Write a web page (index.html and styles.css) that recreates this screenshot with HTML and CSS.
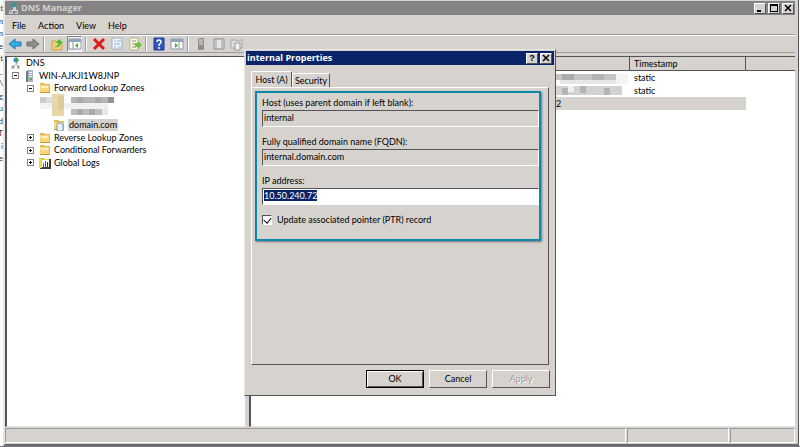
FILE: index.html
```
<!DOCTYPE html>
<html lang="en">
<head>
    <meta charset="UTF-8">
    <meta name="viewport" content="width=device-width, initial-scale=1.0">
    <title>DNS Manager</title>
    <link rel="stylesheet" href="styles.css">
</head>
<body>
    <svg width="0" height="0" class="sprites" aria-hidden="true">
        <symbol id="folder" viewBox="0 0 12 12">
            <path d="M1 1h4l1 1h5v9H1z" fill="#e2b955"/>
            <path d="M1 3h9v7H1z" fill="#f7d67c"/>
            <path d="M2 4h7v2H2z" fill="#fdeebb"/>
            <path d="M1 10h10v1H1z" fill="#c9973a"/>
        </symbol>
        <symbol id="server" viewBox="0 0 12 12">
            <path d="M3 0h6v12H3z" fill="#a9b4bf"/>
            <path d="M2 1h2v11H2z" fill="#6d7b8a"/>
            <path d="M5 2h3v1H5zM5 4h3v1H5zM5 6h3v1H5z" fill="#e8eef4"/>
            <path d="M6 8h2v2H6z" fill="#58b04c"/>
        </symbol>
        <symbol id="dns" viewBox="0 0 12 12">
            <circle cx="5" cy="3" r="2.500" fill="#2f8fc4"/>
            <path d="M4 1h2v2h2l-2 2-2-1z" fill="#3fa54c"/>
            <path d="M4 5h3v4H4z" fill="#d5dbe0"/>
            <path d="M1 8h3v4H0v-2zM6 8h3v4H6z" fill="#c8d0d8"/>
            <path d="M1 10h2M6 10h2M5 6h1" stroke="#65717d"/>
        </symbol>
    </svg>

    <div class="behind" aria-hidden="true">
        <span>t</span><span>m</span><span>m</span><span>e</span><span>t</span><span>_</span><span>\</span><span>g</span><span>u</span><span>d</span><span>T</span><span>i</span><span>e</span>
    </div>

    <div class="window">
        <header class="titlebar">
            <svg class="icon"><use href="#dns"/></svg>
            <h1>DNS Manager</h1>
            <div class="caption-buttons">
                <button aria-label="Minimize"><svg viewBox="0 0 8 8"><path d="M1 6h4v2H1z"/></svg></button>
                <button aria-label="Maximize"><svg viewBox="0 0 8 8"><path d="M0 0h8v8H0zM1 2v5h6V2z" fill-rule="evenodd"/></svg></button>
                <button aria-label="Close"><svg viewBox="0 0 8 8"><path d="M1 1l6 6M7 1L1 7" stroke="#000" stroke-width="1.5"/></svg></button>
            </div>
        </header>

        <nav class="menubar">
            <button>File</button>
            <button>Action</button>
            <button>View</button>
            <button>Help</button>
        </nav>

        <div class="toolbar">
            <button aria-label="Back"><svg viewBox="0 0 14 14"><path d="M1 7l6-5v3h6v4H7v3z" fill="#35aee8" stroke="#1878b8"/></svg></button>
            <button aria-label="Forward"><svg viewBox="0 0 14 14"><path d="M13 7L7 2v3H1v4h6v3z" fill="#8e8e8e" stroke="#6c6c6c"/></svg></button>
            <i class="divider"></i>
            <button aria-label="Up one level"><svg viewBox="0 0 14 14"><path d="M2 4h4l1 1h5v8H2z" fill="#f0ce76" stroke="#c9a04a"/><path d="M4 10c3 0 4-2 4-4H6l3-4 4 4h-2c0 3-3 5-7 4z" fill="#4fbc35"/></svg></button>
            <button class="pressed" aria-label="Show console tree"><svg viewBox="0 0 14 14"><path d="M1 2h12v10H1z" fill="#fff" stroke="#8a98a8"/><path d="M1 2h12v3H1z" fill="#8fa5bd"/><path d="M5 5v7" stroke="#8a98a8"/><path d="M10 6v5L7 8.500z" fill="#3fae3a"/></svg></button>
            <i class="divider"></i>
            <button aria-label="Delete"><svg viewBox="0 0 14 14"><path d="M2 2l10 10M12 2L2 12" stroke="#e01b1b" stroke-width="3"/></svg></button>
            <button aria-label="Properties"><svg viewBox="0 0 14 14"><path d="M2 1h10v11H2z" fill="#eef4fa" stroke="#a3b0bf"/><path d="M4 4h2M7 4h4M4 7h6M4 10h2M8 10h3" stroke="#8db4d8"/></svg></button>
            <button aria-label="Export list"><svg viewBox="0 0 14 14"><path d="M2 1h8v12H2z" fill="#fdf9e2" stroke="#b9ae85"/><path d="M4 4h4M4 7h3M4 10h4" stroke="#8a8a8a"/><path d="M7 6h3V4l4 4-4 4v-2H7z" fill="#6cc43c"/></svg></button>
            <i class="divider"></i>
            <button aria-label="Help"><svg viewBox="0 0 14 14"><path d="M2 1h10v12H2z" fill="#2f56bd" stroke="#1c3a8c"/><path d="M5 5q0-2 2-2t2 2q0 1-2 2.500V9M7 10v2" fill="none" stroke="#fff" stroke-width="1.5"/></svg></button>
            <button aria-label="Show action pane"><svg viewBox="0 0 14 14"><path d="M1 2h12v10H1z" fill="#fff" stroke="#8a98a8"/><path d="M1 2h12v3H1z" fill="#8fa5bd"/><path d="M9 5v7" stroke="#8a98a8"/><path d="M5 6v5l3-2.500z" fill="#3fae3a"/></svg></button>
            <i class="divider"></i>
            <button aria-label="New server"><svg viewBox="0 0 14 14"><path d="M4 2l2-1h4v11l-1 1H4z" fill="#8e8e8e"/><path d="M5 3h4M5 5h4M5 7h4" stroke="#dcdcdc"/></svg></button>
            <button aria-label="New zone"><svg viewBox="0 0 14 14"><path d="M2 2h10v10H2z" fill="#e6e6e6" stroke="#8c8c8c"/><path d="M4 2v10M10 2v10" stroke="#9c9c9c"/></svg></button>
            <button aria-label="New record"><svg viewBox="0 0 14 14"><path d="M1 3h5l1 1h3l2-2v9H1z" fill="#dedede" stroke="#a8a8a8"/><path d="M5 6h5v7H5z" fill="#f2f2f2" stroke="#999"/></svg></button>
        </div>

        <main class="console">
            <section class="tree">
                <ul>
                    <li><svg class="icon"><use href="#dns"/></svg><span>DNS</span></li>
                    <li class="level-1"><i class="toggle minus"></i><svg class="icon"><use href="#server"/></svg><span>WIN-AJKJI1W8JNP</span></li>
                    <li class="level-2"><i class="toggle minus"></i><svg class="icon"><use href="#folder"/></svg><span>Forward Lookup Zones</span></li>
                    <li class="level-3">
                        <svg class="redacted" viewBox="0 0 75 24" aria-label="Hidden zones">
                            <path d="M0 3h6v6H0z" fill="#ccc"/><path d="M6 3h6v6H6z" fill="#ddd"/><path d="M0 9h12v6H0z" fill="#f3f3f3"/>
                            <path d="M12 0h12v22H12z" fill="#e8d7a8"/><path d="M18 2h6v14h-6z" fill="#dfcb98"/>
                            <path d="M31 3h43v6H31z" fill="#b6b6b6"/><path d="M37 3h6v6h-6zM55 3h6v6h-6z" fill="#a8a8a8"/><path d="M68 3h6v6h-6z" fill="#949494"/>
                            <path d="M24 9h44v6H24z" fill="#f0f0f0"/>
                            <path d="M31 15h31v6H31z" fill="#bdbdbd"/><path d="M37 15h6v6h-6zM49 15h6v6h-6z" fill="#a9a9a9"/><path d="M62 15h6v6h-6z" fill="#e6e6e6"/>
                        </svg>
                    </li>
                    <li class="level-3"></li>
                    <li class="level-4"><svg class="icon"><use href="#folder"/><path d="M4 4h4l2 2v6H4z" fill="#e8f2fb" stroke="#7d9ab8"/></svg><span class="selected">domain.com</span></li>
                    <li class="level-2"><i class="toggle"></i><svg class="icon"><use href="#folder"/></svg><span>Reverse Lookup Zones</span></li>
                    <li class="level-2"><i class="toggle"></i><svg class="icon"><use href="#folder"/></svg><span>Conditional Forwarders</span></li>
                    <li class="level-2"><i class="toggle"></i><svg class="icon"><path d="M0 1h4l1 1h7v10H1z" fill="#3d3d30"/><path d="M0 1h3l1 1h6v1H3v8H0z" fill="#e6dc4a"/><path d="M3 3h7v7H3z" fill="#fff"/><path d="M4 6h1v4H4z" fill="#27c"/><path d="M6 4h1v6H6z" fill="#d22"/><path d="M8 5h1v5H8z" fill="#22a"/></svg><span>Global Logs</span></li>
                </ul>
            </section>

            <section class="records">
                <table>
                    <colgroup><col class="col-data"><col class="col-time"><col></colgroup>
                    <thead>
                        <tr><th></th><th>Timestamp</th><th></th></tr>
                    </thead>
                    <tbody>
                        <tr>
                            <td><svg class="mosaic" viewBox="0 0 72 13"><path d="M0 3h60v6H0z" fill="#c4c4c4"/><path d="M6 3h12v6H6z" fill="#aaa"/><path d="M36 3h12v6H36z" fill="#b4b4b4"/><path d="M4 9h60v4H4z" fill="#e6e6e6"/><path d="M60 3h12v10H60z" fill="#f4f4f4"/></svg></td>
                            <td>static</td><td></td>
                        </tr>
                        <tr>
                            <td><svg class="mosaic" viewBox="0 0 72 13"><path d="M0 2h66v9H0z" fill="#d2d2d2"/><path d="M6 4h6v7H6zM24 2h6v7h-6zM48 4h6v7h-6z" fill="#b4b4b4"/><path d="M12 2h6v6h-6z" fill="#f0f0f0"/></svg></td>
                            <td>static</td><td></td>
                        </tr>
                        <tr class="current"><td>2</td><td></td><td></td></tr>
                    </tbody>
                </table>
            </section>
        </main>

        <footer class="statusbar"><span></span><span></span><span></span></footer>
    </div>

    <form class="dialog" role="dialog" aria-labelledby="dialog-title">
        <header class="dialog-title">
            <h2 id="dialog-title">internal Properties</h2>
            <div class="caption-buttons">
                <button type="button" aria-label="Help">?</button>
                <button type="button" aria-label="Close"><svg viewBox="0 0 8 8"><path d="M1 1l6 6M7 1L1 7" stroke="#000" stroke-width="1.5"/></svg></button>
            </div>
        </header>
        <div class="tabs">
            <button type="button" class="active">Host (A)</button>
            <button type="button">Security</button>
        </div>
        <div class="tab-page">
            <div class="highlight">
                <label for="host">Host (uses parent domain if left blank):</label>
                <input type="text" id="host" value="internal" readonly>
                <label for="fqdn">Fully qualified domain name (FQDN):</label>
                <input type="text" id="fqdn" value="internal.domain.com" readonly>
                <label for="ip">IP address:</label>
                <input type="text" id="ip" value="10.50.240.72" autofocus>
                <div class="check">
                    <input type="checkbox" id="ptr" checked>
                    <label for="ptr">Update associated pointer (PTR) record</label>
                </div>
            </div>
        </div>
        <div class="actions">
            <button type="button" class="default">OK</button>
            <button type="button">Cancel</button>
            <button type="button" disabled>Apply</button>
        </div>
    </form>

    <script>
        document.getElementById('ip').select();
    </script>
</body>
</html>
```
FILE: styles.css
```
* {
    margin: 0;
    padding: 0;
    box-sizing: border-box;
}

body {
    font-family: Lato, "Open Sans", sans-serif;
    font-size: 9px;
    line-height: 12px;
    color: #000;
    background-color: #fff;
    height: 100vh;
    overflow: hidden;
    border-bottom: 1px solid #77737a;
}

button, input {
    font: inherit;
    color: inherit;
    border: none;
    background: none;
}

.sprites {
    position: absolute;
}

.icon {
    width: 12px;
    height: 12px;
    flex: none;
}

/* page showing behind the window */
.behind {
    position: absolute;
    left: 0;
    top: 2px;
    width: 3px;
    height: 162px;
    overflow: hidden;
    display: flex;
    flex-direction: column;
    justify-content: space-between;
    align-items: flex-end;
    font-size: 8px;
}

.behind span {
    height: 12px;
    color: #333;
}

.window {
    height: calc(100vh - 1px);
    margin: 0 1px 0 3px;
    display: flex;
    flex-direction: column;
    background-color: #d6d3ce;
    border-left: 2px solid #e8e6e2;
    border-right: 1px solid #55525a;
    border-bottom: 2px solid #6b686e;
    padding: 1px 3px 0 0;
}

.titlebar {
    display: flex;
    align-items: center;
    height: 14px;
    padding: 0 1px 0 4px;
    background-color: #848284;
    color: #d6d3ce;
}

.titlebar h1,
.dialog-title h2 {
    flex: 1;
    font-family: "Open Sans", sans-serif;
    font-size: 9px;
    line-height: 12px;
    font-weight: bold;
}

.caption-buttons {
    display: flex;
    gap: 2px;
}

.caption-buttons button {
    width: 12px;
    height: 11px;
    display: flex;
    align-items: center;
    justify-content: center;
    background-color: #d6d3ce;
    border: 1px solid;
    border-color: #fff #55525a #55525a #fff;
    color: #000;
    font-family: "Liberation Sans", sans-serif;
    font-weight: bold;
}

.caption-buttons svg {
    width: 8px;
    height: 8px;
}

.menubar {
    display: flex;
    align-items: center;
    gap: 12px;
    height: 20px;
    padding: 2px 0 0 7px;
    border-bottom: 1px solid #9c9aa0;
}

.toolbar {
    display: flex;
    align-items: center;
    gap: 3px;
    height: 18px;
    padding-left: 2px;
    border-top: 1px solid #fff;
    border-bottom: 1px solid #9c9aa0;
}

.toolbar button {
    width: 15px;
    height: 16px;
    display: flex;
    align-items: center;
    justify-content: center;
}

.toolbar svg {
    width: 14px;
    height: 14px;
    flex: none;
}

.toolbar .pressed {
    background-color: #eceae7;
    border: 1px solid;
    border-color: #848284 #fff #fff #848284;
}

.divider {
    width: 2px;
    height: 14px;
    margin-right: 1px;
    border-left: 1px solid #9c9aa0;
    border-right: 1px solid #fff;
}

.console {
    flex: 1;
    min-height: 0;
    display: grid;
    grid-template-columns: 240px 1fr;
    gap: 4px;
    margin-top: 3px;
}

.tree,
.records {
    min-width: 0;
    background-color: #fff;
    border-top: 1px solid #55525a;
    border-left: 2px solid #55525a;
    border-bottom: 1px solid #e8e6e2;
}

.tree ul {
    display: grid;
    grid-template-rows: repeat(9, 1fr);
    height: 112px;
    list-style: none;
}

.tree li {
    display: flex;
    align-items: center;
    gap: 3px;
    min-height: 0;
    padding-left: 4px;
    white-space: nowrap;
}

.tree .level-1 {
    padding-left: 5px;
}

.tree .level-2 {
    padding-left: 20px;
}

.tree .level-3 {
    padding-left: 33px;
    align-items: flex-start;
}

.tree .level-4 {
    padding-left: 46px;
}

.selected {
    background-color: #d6d3ce;
    padding: 0 1px;
}

.toggle {
    width: 7px;
    height: 7px;
    margin-right: 2px;
    border: 1px solid #848284;
    background: linear-gradient(#000, #000) center / 3px 1px no-repeat,
        linear-gradient(#000, #000) center / 1px 3px no-repeat;
}

.toggle.minus {
    background: linear-gradient(#000, #000) center / 3px 1px no-repeat;
}

.redacted {
    width: 75px;
    height: 24px;
    flex: none;
}

.records table {
    width: 100%;
    border-collapse: separate;
    border-spacing: 0;
    table-layout: fixed;
}

.col-data {
    width: 379px;
}

.col-time {
    width: 116px;
}

.records th {
    height: 14px;
    padding: 0 4px;
    font-weight: normal;
    text-align: left;
    background-color: #d6d3ce;
    border-right: 1px solid #55525a;
    border-bottom: 1px solid #55525a;
}

.records td {
    height: 13px;
    padding: 0 4px;
}

.records th:last-child {
    border-right: none;
}

.records td:first-child {
    padding-left: 305px;
}

.records .current td:not(:last-child) {
    background-color: #d6d3ce;
}

.mosaic {
    display: block;
    width: 72px;
    height: 13px;
}

.statusbar {
    display: grid;
    grid-template-columns: 1fr 102px 65px;
    gap: 1px;
    height: 17px;
    padding: 1px 0;
}

.statusbar span {
    border: 1px solid;
    border-color: #9c9aa0 #fff #fff #9c9aa0;
}

.dialog {
    position: absolute;
    left: 244px;
    top: 49px;
    width: 312px;
    display: flex;
    flex-direction: column;
    padding: 1px 1px 7px 1px;
    background-color: #d6d3ce;
    border: 1px solid;
    border-color: #e8e6e2 #55525a #55525a #e8e6e2;
}

.dialog-title {
    display: flex;
    align-items: center;
    height: 14px;
    padding: 0 2px 0 1px;
    background-color: #0a246a;
    color: #fff;
}

.tabs {
    display: flex;
    align-items: flex-end;
    height: 22px;
    padding-left: 5px;
}

.tabs button {
    width: 38px;
    height: 14px;
    border: 1px solid;
    border-color: #fff #55525a transparent #fff;
    border-bottom: none;
    border-radius: 2px 2px 0 0;
}

.tabs .active {
    width: 41px;
    height: 16px;
}

.tab-page {
    height: 278px;
    margin: 0 5px;
    padding: 3px;
    border: 1px solid;
    border-color: #fff #55525a #55525a #fff;
}

.highlight {
    display: flex;
    flex-direction: column;
    width: 286px;
    padding: 4px 0 13px 5px;
    border: 2px solid #0b8aa8;
    box-shadow: 1px 1px 2px #77737a;
}

.highlight > label {
    height: 13px;
}

.highlight input[type="text"] {
    height: 17px;
    margin-bottom: 9px;
    padding: 0 0 2px 1px;
    border: 1px solid;
    border-color: #55525a #fff #fff #55525a;
    outline: none;
}

.highlight #ip {
    background-color: #fff;
}

#ip::selection {
    background-color: #0a246a;
    color: #fff;
}

.check {
    display: flex;
    align-items: center;
    gap: 5px;
}

.check input {
    appearance: none;
    width: 10px;
    height: 10px;
    border: 1px solid;
    border-color: #55525a #fff #fff #55525a;
    background-color: #fff;
    position: relative;
}

.check input:checked::after {
    content: "";
    position: absolute;
    left: 2px;
    top: 0;
    width: 4px;
    height: 6px;
    border: solid #000;
    border-width: 0 1px 1px 0;
    transform: rotate(40deg);
}

.actions {
    display: flex;
    justify-content: flex-end;
    gap: 5px;
    padding: 5px 4px 0 0;
}

.actions button {
    width: 58px;
    height: 18px;
    border: 1px solid;
    border-color: #fff #55525a #55525a #fff;
}

.actions .default {
    border-color: #000;
    box-shadow: inset 1px 1px #fff, inset -1px -1px #55525a;
}

.actions button:disabled {
    color: #9c9aa0;
    text-shadow: 1px 1px #fff;
}
```
